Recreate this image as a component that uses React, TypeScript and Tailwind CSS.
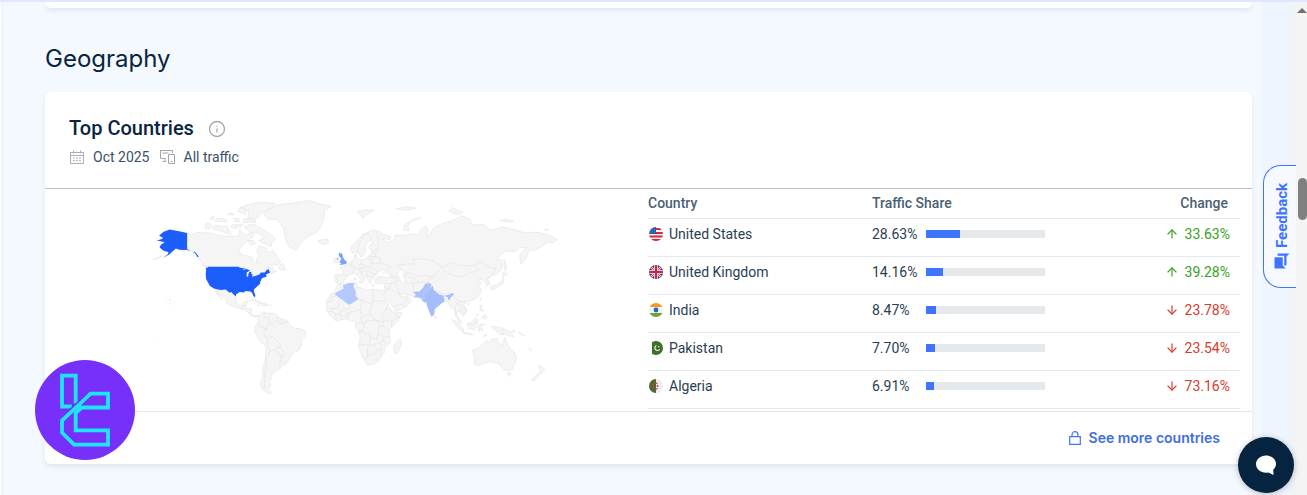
import React from 'react';
import { ArrowDown, ArrowUp, Info } from 'lucide-react';
import { MdForum } from 'react-icons/md';

interface CountryRow {
  name: string;
  share: number;
  change: number;
  flag: React.ReactNode;
}

// Outlines are "lon,lat" pairs
const LAND: string[] = [
  // Canada
  '-141,69.6 -137,69 -134,69.5 -129,70 -125,69.6 -120,69.6 -115,68.5 -109,68 -104,68 -98,67.8 -95,68 -94,71.5 -91,69.5 -88,68.5 -85,69.6 -82,69.2 -82,67.5 -86,66.5 -87,65 -92,63 -94,60.5 -94.5,58.7 -92,57 -88,56.5 -82.5,55.2 -82,53 -79,51.3 -79,54 -76.5,56.5 -78.5,59 -77.5,62.3 -73,62 -70,60.8 -69.5,59 -67,58.5 -64.5,60.2 -62,57.8 -60,55 -57,52.5 -60,50.2 -66,50.2 -70,47.8 -65,48.8 -64,46.5 -61,46 -66,43.7 -67,45 -69,47.3 -71,45 -75,45 -79,43.3 -83,42 -82.5,45.3 -84.5,46.5 -89,48.2 -95,49 -123,49 -125,50 -128,52 -130.5,55 -134,58.5 -138,59.5 -141,60.3',
  // Arctic islands
  '-117,71.5 -112,71 -106,69.5 -102,69 -105,72.7 -110,73 -115,73.4 -119,72.5',
  '-125,72 -121,71.5 -119.5,74 -124,74.3',
  '-90,72.5 -85,70 -80,69.8 -74,68.3 -73,66.5 -77,65.5 -74,64.5 -66,62 -65,64.5 -62,66.5 -67,69 -72,71 -78,72.8 -81,73.7 -85,73.6',
  '-102,72.7 -97,71.6 -96.5,73.8 -101,73.6',
  '-95,73.8 -91,74 -93,72.4 -96,72.6',
  '-110,75.2 -105,75 -108,76.5 -115,76.5 -117,75.4',
  '-98,75 -94,75 -95,76.5 -100,76.5',
  '-91,74.7 -80,74.7 -80,75.7 -90,76.5',
  '-87,76.3 -79,76.3 -75,78.5 -64,81.5 -62,82.5 -75,83 -88,82 -92,81 -86,79.5',
  '-96,79.5 -89,78.3 -88,80 -93,81.2',
  '-105,78 -99,78 -101,79',
  '-118,76 -121,76.5 -117,77.5',
  '-87,65.5 -84,63.2 -80,63.8 -82,65.7',
  '-59,47.7 -55.5,46.8 -53,47 -55.5,51.5 -57.5,50.7',
  '-128,50.8 -123.5,48.3 -126,49.2',
  // Greenland
  '-73,78.2 -68,76 -60,76 -55,72 -54,69.5 -53,66 -50,62 -44,59.9 -42,62 -38,65.5 -32,68 -25,70 -22,72.5 -19,76 -18,80 -12,81.5 -22,82.3 -32,83.6 -45,82.8 -60,82 -67,80.5',
  '-24,65.5 -22,64 -18,63.4 -14,64.8 -16,66.4 -21,65.8',
  // Mexico and central America
  '-117,32.5 -111,31.3 -106.5,31.7 -104,29.3 -101,29.5 -99.5,27.5 -97.2,25.9 -97.8,22.3 -96,19 -94.5,18.2 -91.5,18.6 -90.3,21 -87,21.5 -88,18.4 -91,17.5 -92.2,14.6 -96,15.8 -101,17.5 -105.5,20 -106,23 -109.4,26 -112.5,30 -114.8,31.7 -112,27 -109.6,23 -112.2,25.8 -115,29',
  '-92,14.6 -91,17.7 -88.3,18.3 -88.8,15.9 -83.2,15 -83.7,11 -81.5,9 -79,9.5 -77.3,8.5 -80,7.4 -83,8.3 -85.8,10.5 -87.7,13',
  '-85,22 -81,23.2 -77,21.5 -74.2,20.2 -77.7,19.9 -78.5,21.5 -82,22.6',
  '-74,19.9 -71,19.9 -68.4,18.6 -71,17.7 -74.4,18.3',
  '-67.2,18.4 -65.7,18.4 -65.8,18 -67,18',
  '-78.3,18.4 -76.3,18 -77.5,17.8',
  // South America
  '-77.3,8.5 -75,10.8 -71.8,12.3 -71,11 -68,11.3 -62,10.6 -60,8.3 -57,6 -52,4.5 -50,1.5 -48,-1 -44,-2.7 -39,-3 -35,-5.5 -35,-9 -39,-13 -39,-18 -41,-22 -46,-24 -48.7,-28 -52,-33 -55,-35 -58.4,-34.2 -57,-37 -62,-39 -65,-41 -65.5,-45 -68,-47.5 -66,-49 -69,-52.3 -65,-54.8 -69,-55.5 -74,-52.5 -75.5,-48 -73,-42 -73.5,-37 -71.5,-31 -70.3,-19 -76,-14 -79.5,-7.5 -81,-5 -80,-1 -78.7,1.5 -77.3,4',
  // Europe mainland
  '-9,43.2 -2,43.4 -1.3,46 -4.6,48.3 1.5,50.2 4,52 8,54 8.2,57 10.6,57.6 10,54.5 14,54 19,54.5 21.5,57 24,57.3 23.5,59.2 28,59.6 30,60 23,60 21.3,61.5 25.3,65 22,65.8 17.3,61.5 18.8,60 16.5,56.8 14.3,55.5 11,59 7,58 5,60 6,62.5 12,66 16,69 25,71 31,70.2 33,69.3 41,67.5 40,66.2 33,66.6 38,64 44,66 45,68.5 54,68.4 60,69 66,68.5 67,71 72,73 74,71.5 73,67.5 76,69 80,72.5 86,74 98,76 104,77.7 112,76 113,73.5 124,73.7 130,71 140,72.5 150,71.5 160,69.7 170,70 180,69 190,66.2 187,64.6 180,64.5 177,62.6 170,60 164,59.8 163,57 160,53 156.7,51 156,57 162,61.5 156,61.6 152,59 143,59.3 135,54.7 140,53.5 140.5,48 135,43.3 130.7,42.3 127.5,39.8 129.4,36 126.5,34.5 125,38 121.5,40 118,39 122.3,37 119.3,35 121.8,31 119,25.5 113,22.3 108,21.6 106,19 109,13.5 107,10.4 105,9 105,11 100.5,13.4 99.3,10 103.3,4 103.8,1.4 101,3 100,7 98.3,9 98,15 94.3,16 92,21.5 88,21.7 80,15 77.5,8 73,18 70,21 67,24.6 57,26.7 51,28 48,30 51,25 56.3,26 59.7,22.5 55,17 45,12.9 42.7,17 39,21.5 35,28 34.4,31.3 36,36.5 30.5,36.5 27.3,37 26.3,39.5 30,41.2 35,42 41,41.2 37,45 35,46.5 31,46.7 28,43.8 26,40.7 24,40.4 22.7,36.5 19.5,41 13.7,45.4 18.4,40 16,38 12.5,41.6 8.8,44.4 3.1,43 0,40 -2,36.8 -6,36.2 -9,38',
  '-10,52 -6.3,52.2 -6,54.2 -8,55.2 -10,54',
  '12.5,37.9 15.6,38.2 15,36.8',
  '8.3,40.9 9.7,41 9.6,39.2 8.5,39',
  '24,35.4 26.3,35.2 24,35',
  '11,79.3 16,76.7 21,78.7 26,80 17,80',
  '46,80.5 55,80 64,80.8 55,81.4',
  '52,71.2 57,70.7 56,73 60,75.5 68,76.8 62,76.4 54,74',
  '93,79.5 100,78 105,79 96,81',
  '138,75.5 146,75 151,75.2 143,76.1',
  '178,71 182,71.5 180,70.8',
  '142,54.3 144.5,49 143,46 142,50',
  // Africa
  '-6,35.8 0,36 10,37.3 11,34 20,31 25,31.8 32.3,31.2 34,27.5 37.3,21 38.5,18 43,12 51,11.9 47,4 40,-3 39.5,-8 40.7,-15 35,-20 35.4,-24 32.6,-27 30,-31 25.7,-34 20,-34.8 18,-32 15,-27 12,-18 13.7,-11 12,-5 9,-1 9.6,4 5,4.5 1,6 -8,4.4 -13,8.6 -17,14.7 -16,20 -17,21 -13,27.7 -9.7,30',
  '49.3,-12 50.5,-16 47,-25 44,-24 43.5,-21 44.5,-16.5',
  '80,9.7 81.8,7.3 80.3,6',
  // East Asia and Oceania
  '130,33.8 136,35.8 138.5,37.5 141.3,41.3 142,39.5 140.7,36 136,33.6 131,31.3',
  '140,41.7 141.7,45.4 145.3,43.5 142,42.3',
  '120.2,23 121.7,25.2 121,22.2',
  '108.7,19.5 111,20 110,18.4',
  '95.3,5.6 98.5,4 103.5,-1 106,-3.2 105.7,-5.8 101,-2.5',
  '105.3,-6.7 110,-6.5 114.4,-7.8 114,-8.5 108,-7.7',
  '109,1.5 113,3 116.7,7 119,5 117.5,1 115.8,-4 110.2,-2.8',
  '119.5,0.5 125,1.5 121,0.4 123,-4.8 120.4,-3 119.7,-5.5 118.8,-2.8',
  '120.6,18.5 122.2,18.3 121.6,15 124,12.8 120.6,13.8',
  '122,7 125.5,9.7 126.4,7.3 125.4,5.7',
  '117,8.4 119.5,11.2 118.5,9.4',
  '123.6,-10.3 127,-8.4 124.5,-9.2',
  '131,-0.8 134.2,-1 138,-1.7 141,-2.6 147.5,-6 150.7,-10.5 143.5,-8.3 138,-8.3 133,-4 132,-2.5',
  '148.5,-5.6 152,-4.2 150.5,-6.3',
  '155,-5.7 161,-9.5 156,-7.5',
  '164,-20.2 167,-22.3 165,-21.6',
  '114,-22 119,-20 122.3,-17.7 126,-14 129.5,-15 131,-12 136.6,-12 135.5,-15 140.5,-17.6 142.5,-10.8 146,-19 151,-23.5 153.5,-28.5 150,-37.5 146,-39 143.5,-38.7 139,-35.8 137.8,-33 134,-32.8 129,-31.6 124,-33.5 118,-35 115,-34.2 115.7,-31.5',
  '144.7,-40.8 148.2,-41 147,-43.5',
  '173,-34.6 178.3,-37.8 175,-41.5 174,-39',
  '172.7,-40.6 174.2,-41.8 168.8,-46.6 166.6,-45.8',
  '-160,22 -159.3,22 -159.5,21.7',
  '-156,20 -155,19.5 -155.8,19',
];

const BORDERS: string[] = [
  // South America
  '-72,11.5 -72.5,7.5 -67.5,6 -67,1.5 -70,0 -70,-4.2 -75,-0.2 -79,-4.8',
  '-77.7,0.8 -75,-0.2 -70,-4.2 -73,-7.5 -70.5,-11 -69,-12.5 -69.5,-17.5 -67,-23 -70,-29 -70,-34 -71.7,-40 -71.7,-47 -72,-52',
  '-67,1.5 -64,1.5 -60.7,5.2 -60,8.3',
  '-60,5 -59,1.5 -52,2.3 -51.6,4',
  '-57,6 -57,2',
  '-54,5.8 -54.5,2.3',
  '-69,-11 -65,-10 -60.5,-14 -58,-17 -58,-20 -62,-20 -62.7,-22 -67,-23',
  '-58,-20 -55.8,-22 -54.3,-24.5 -54.6,-27 -58.5,-27.2 -57.7,-25 -62.7,-22',
  '-54.6,-27 -57.6,-30 -53.5,-33.5',
  '-57.6,-30 -58.3,-34',
  // Africa
  '-13,27.7 -8.7,27.7 -8.7,26 -12,26 -12,23.5 -13,21.3 -17,21',
  '-5,25 -6,16 -12,15 -16,16.4',
  '-12,15 -11.5,12.5 -16.5,12.4',
  '-11.5,12.5 -8,10.5 -8,4.5',
  '-8,10.5 -5,10 -3,10 -3,5',
  '-5,10 -5.5,11 -1,15 4,15 4,19',
  '1,6 1,11 4,12',
  '2.7,6.4 3.6,11.7 8,13 13.5,13.7 15,20 15,23 24,19.5',
  '12,23.5 15,23',
  '11,34 9.5,30 10,26 12,23.5',
  '25,31.8 25,22 37,22',
  '25,22 24,19.5 24,15.7 22,13 23,10.5 27,5 31,3.7 36,4.4 42,4 41.5,-1.7',
  '13.5,13.7 15,10 14,6 16,2 10,2',
  '15,7.5 19,9 23,10.9',
  '18.5,4 27,5 31,3.7 30,-1.4 29,-4.5 30.8,-8.3 28.5,-8.5 28.4,-12 30,-13 25,-11.5 22,-13 22,-16 23.5,-17.6 12,-17.2',
  '12,-6 16.7,-6 17.5,-8 21.7,-7 22,-11 24,-11',
  '16,2 18.5,4 16,-4 12,-5',
  '34,4.4 34,-1 39.5,-4.8',
  '30,-1 34,-1',
  '38.5,18 36.5,15 34,10 33,8 36,4.4',
  '36.5,15 42.5,12.5',
  '43,11 48,8 42,4',
  '30.8,-8.3 33,-9.5 40.4,-10.5',
  '33,-9.5 34.5,-14 30,-15.6 33,-17 32,-22.4 32,-26.5',
  '34.5,-12 35.8,-16 34.5,-17',
  '23.5,-17.6 25.3,-17.8 30,-15.6',
  '25.3,-17.8 29,-22 25.5,-25.5 20.8,-26.8 20,-22 21,-18',
  '20,-22 20,-28.5 16.5,-28.6',
  '29,-22 32,-22.4',
  '27,-30 29,-29 28.5,-30.5 27,-30',
  // Europe
  '-2,43.4 3,42.4',
  '-7,42 -7,37.2',
  '2.5,51 6,49.5 8,49 7.5,47.5 7,44',
  '6,49.5 6,51.8 7,53.3',
  '7.5,47.5 13,47.5 13.7,45.5 17,46 22,46 24,44 28,44',
  '12,50.3 15,51 18.7,49.5 14,48.5 12,50.3',
  '14.3,54 15,51',
  '18.7,49.5 22.5,49 24,50.5 23.5,54 20,54.4',
  '13,47.5 17,48 22.5,48.3 26,48 28,46 28.2,45.4',
  '23.5,51.5 31,51.5 31,55.5 27,56 28,59.5',
  '23.5,54 27,56 21,56',
  '24,57.8 27.5,57.5',
  '31,51.5 35,51 40,49.5 38,47',
  '19,42 22,42 26.3,41.7',
  '19,45 20,42',
  '11.5,59 12.5,64 17,68.5 20.5,69 24,66',
  '28.5,70 29,67 30,63 28,60.5',
  // Asia
  '47,42 41,43.3',
  '51,47 47,50 55,51 62,51 61,54 71,54.5 77,53.5 83,51 87,49',
  '53,41 56,45 62,43.5 66,42 71,42.5 80,42 83,46 87,49',
  '53,37.3 61,36.5 66,37.5 71,38 75,37.2',
  '56,41 61,41.3 66,37.5',
  '61,36.5 61,30 62,26',
  '61,30 66,30 70,33 72,36.8',
  '87,49 92,50.7 98,52 99,50.5 108,49.5 116,50 120,47 112,45 105,41.7 97,42.7 90,45.5 87,49',
  '116,50 120,53 127,50 131,48 135,48.3 131,43',
  '80,42 74,40 75,37 78,35',
  '78,35 79,31 82,30 88,28 97,28.3 98,25 101,21.5 108,21.6',
  '92,24 94,25 97,28',
  '98,21 100,20 98,16 99,11',
  '100,20 102,18 105,16 105,14.5 102.5,13.8 103,11',
  '102,22 104,19 107,16 107.5,12 105,10.5',
  '126,40 130.5,42.3',
  '126.5,37.8 128.5,38.4',
  '36,36.5 42,37 44.5,37 48,30',
  '44.5,37 45,39.5 48.5,38.5',
  '41,41.5 45,41 48.5,41.8',
  '35.5,33 39,32.5 42,37',
  '39,32.5 47,29 50,25',
  '35,29.5 39,32',
  '43,17 49,18.5 52,19 55,22.7 55.5,25',
  '52,19 53,16.7',
  '141,-2.6 141,-9',
  '109.5,1 115,1 117.5,4',
];

const UNITED_STATES: string[] = [
  '-122.8,49 -95,49 -94.5,48.6 -91,48 -88.5,48.2 -92,46.7 -88,47.4 -84.7,46.4 -86,45.8 -87.8,45 -87.8,42 -86.5,41.8 -86.2,44.2 -85,45.7 -83.4,45 -83.8,43.8 -82.6,43.8 -83,41.7 -79,42.7 -76.5,43.5 -75,45 -71.5,45 -70,46.8 -68,47.3 -67,44.8 -70.5,43.5 -70,41.7 -74,40.7 -75.5,38 -76,36 -81,32 -81.4,30.5 -80,26.5 -80.5,25.2 -81.8,26.2 -83,29 -84.5,30 -89,30.3 -90,29.1 -94,29.6 -97.3,27.5 -97.2,25.9 -99.5,27.5 -101.5,29.6 -103,29 -106.5,31.7 -111,31.3 -117,32.5 -120.6,34.6 -124,40 -124.4,43 -124,46.5 -124.5,48.3 -122.8,48.2',
  '-141,69.6 -147,70.3 -156.5,71.3 -162,70.2 -166,68.3 -162.5,67 -163.5,66.4 -168,65.6 -161,64.6 -164.5,63.2 -165.5,61.5 -162,59.6 -157.5,58.7 -158.5,57.3 -163,54.8 -157,57.2 -153.5,59.4 -151,61 -148,60.2 -144,60 -141,60.2 -138,59.2 -141,60.8',
  '-136,58.8 -134,58.2 -131.500,55.5 -130.5,56 -134,59',
];

const UNITED_KINGDOM = ['-5.5,50.1 1.2,51 1.6,52.7 -0.2,53.5 -2,55.8 -2.2,57.5 -5,58.6 -5.7,56.5 -3.2,54.5 -4.4,53 -5,51.8 -3,51.4', '-8,54.4 -6,54 -6.2,55.2'];
const ALGERIA = ['-2,35 3,36.8 8.5,36.9 7.6,34 9.5,30.2 9.5,26.5 12,23.5 5.5,19.5 3.2,19 -8.7,27.3 -8.7,28.7 -3,31.5 -1.2,32.5'];
const PAKISTAN = ['61.6,25.2 66.5,25 68,23.8 71,24.5 70,28 74.5,31 75.5,33 77.5,35.5 74.5,37 71.5,36 70,33.5 66.5,30 61,29.6 63.2,27.2'];
const INDIA = [
  '68.5,23.7 71,24.5 70,28 74.5,31 75.5,33 78.5,34.5 79,31.5 81,30 84,27.5 88,26.7 88.5,24.5 89,21.8 86.5,20.3 82.3,16.6 80.2,15 79.8,10.5 77.5,8 76.2,10.2 74,15.5 72.8,20 72.3,21.3 70.8,20.7 69,22.3',
  '88.5,26.5 92,27 96.5,28.8 97,27.2 94.7,25.3 93,22.5 91.5,23.7 92.2,25 89.8,25.7',
];

// Miller projection, centred on Greenwich
const project = (point: string): string => {
  const [lon, lat] = point.split(',').map(Number);
  const phi = (lat * Math.PI) / 180;
  const x = 204 + lon * 1.12;
  const y = 136.5 - 63 * 1.25 * Math.log(Math.tan(Math.PI / 4 + 0.4 * phi));
  return `${x.toFixed(1)} ${y.toFixed(1)}`;
};

const toPath = (lines: string[], close = true): string =>
  lines.map(line => 'M' + line.split(' ').map(project).join('L') + (close ? 'Z' : '')).join('');

const WorldMap: React.FC = () => (
  <svg viewBox="0 0 430 216" className="w-[430px] max-w-full" role="img" aria-label="Traffic by country">
    <path d={toPath(LAND)} fill="#f5f5f5" stroke="#e2e2e2" strokeWidth="0.6" strokeLinejoin="round" />
    <path d={toPath(BORDERS, false)} fill="none" stroke="#e2e2e2" strokeWidth="0.6" />
    {/* Caspian and Black seas */}
    <path d={toPath(['47,45 51,47 53,45 51,43 53.5,40 53.5,37 50,37.2 49,40 47.5,43', '28.5,43.5 31,46.3 34,44.5 38,44.5 41,42 38,41.2 33,42 29,41.4'])} fill="#fff" stroke="#e2e2e2" strokeWidth="0.5" />
    <path d={toPath(UNITED_STATES)} fill="#1c5efc" />
    <path d={toPath(UNITED_KINGDOM)} fill="#7ea1f5" />
    <path d={toPath(INDIA)} fill="#a6bdfc" />
    <path d={toPath(PAKISTAN)} fill="#acc1fb" />
    <path d={toPath(ALGERIA)} fill="#b3c8fd" />
    <path d="M12 71l9-4M28 111h2M33 113h1M16 153h1" stroke="#d5d8de" strokeWidth="0.7" />
  </svg>
);

const Flag: React.FC<{ id: string; children: React.ReactNode }> = ({ id, children }) => (
  <svg viewBox="0 0 14 14" className="h-3.5 w-3.5 shrink-0" aria-hidden="true">
    <clipPath id={id}><circle cx="7" cy="7" r="7" /></clipPath>
    <g clipPath={`url(#${id})`}>{children}</g>
  </svg>
);

const COUNTRIES: CountryRow[] = [
  {
    name: 'United States',
    share: 28.63,
    change: 33.63,
    flag: (
      <Flag id="us">
        <path fill="#f4f4f6" d="M0 0h14v14H0z" />
        <path fill="#d7263f" d="M7 1h7v2H7zM7 5h7v2H7zM0 8.600h14v1.800H0zM0 12h14v2H0z" />
        <path fill="#2c5aa8" d="M0 0h7v7H0z" />
        <path stroke="#9db8e2" strokeWidth="0.6" strokeDasharray="0.8 1.2" d="M1 3h6M1 5h6" />
      </Flag>
    ),
  },
  {
    name: 'United Kingdom',
    share: 14.16,
    change: 39.28,
    flag: (
      <Flag id="gb">
        <path fill="#283c86" d="M0 0h14v14H0z" />
        <path stroke="#f5f5f8" strokeWidth="2.2" d="M1 1l12 12M13 1L1 13" />
        <path stroke="#d8203a" strokeWidth="0.9" d="M1 1l12 12M13 1L1 13" />
        <path stroke="#f5f5f8" strokeWidth="3.600" d="M7 0v14M0 7h14" />
        <path stroke="#d8203a" strokeWidth="2" d="M7 0v14M0 7h14" />
      </Flag>
    ),
  },
  {
    name: 'India',
    share: 8.47,
    change: -23.78,
    flag: (
      <Flag id="in">
        <path fill="#f4f4f4" d="M0 0h14v14H0z" />
        <path fill="#f5981d" d="M0 0h14v4H0z" />
        <path fill="#6ba52f" d="M0 10h14v4H0z" />
        <circle cx="7" cy="7" r="2.4" fill="#2168c4" />
      </Flag>
    ),
  },
  {
    name: 'Pakistan',
    share: 7.7,
    change: -23.54,
    flag: (
      <Flag id="pk">
        <path fill="#fafafa" d="M0 0h14v14H0z" />
        <path fill="#3f702a" d="M3 0h11v14H3z" />
        <path fill="none" stroke="#f4f7f2" strokeWidth="1.2" d="M7.500 4.500a2.600 2.600 0 1 0 3.200 3.800" />
        <circle cx="9.800" cy="5.800" r="0.700" fill="#f4f7f2" />
      </Flag>
    ),
  },
  {
    name: 'Algeria',
    share: 6.91,
    change: -73.16,
    flag: (
      <Flag id="dz">
        <path fill="#eeeeee" d="M0 0h14v14H0z" />
        <path fill="#44702f" d="M0 0h7v14H0z" />
        <path fill="none" stroke="#d2304a" strokeWidth="1.2" d="M8.500 4.600a2.800 2.800 0 1 0 0 4.800" />
        <circle cx="8.5" cy="7" r="1" fill="#d2304a" />
      </Flag>
    ),
  },
];

const CalendarIcon: React.FC = () => (
  <svg viewBox="0 0 14 14" className="h-3.5 w-3.5" fill="none" stroke="#a9adb8" aria-hidden="true">
    <path d="M0.500 2.500h13v11H0.500zM0.500 5.500h13M3.500 0.500v3M10.500 0.500v3" />
    <path d="M3 8h8M3 10.700h8" strokeDasharray="2 1" />
  </svg>
);

const DevicesIcon: React.FC = () => (
  <svg viewBox="0 0 16 14" className="h-3.5 w-4" fill="none" stroke="#a0a4ae" aria-hidden="true">
    <path d="M6.500 8.500h-5v-8h12V3M3.500 3h6M7 11.500H3.500M6 8.500v3" />
    <path d="M9.500 4.500h6v9h-6zM11.500 11.500h2" />
  </svg>
);

const LockIcon: React.FC = () => (
  <svg viewBox="0 0 12 14" className="h-3.5 w-3" fill="none" stroke="#3e74fe" strokeWidth="1.2" aria-hidden="true">
    <path d="M0.700 5.600h10.600v7.700H0.700zM3 5.600V3.700a3 3 0 0 1 6 0v1.900" />
  </svg>
);

const BrandBadge: React.FC = () => (
  <svg viewBox="0 0 100 100" className="absolute top-[358px] left-[35px] h-[100px] w-[100px]" aria-hidden="true">
    <circle cx="50" cy="50" r="50" fill="#7630fa" />
    <g fill="none" stroke="#1de5fb" strokeWidth="3.8">
      <path d="M40.700 43.500V15.700H27V46.500H37" />
      <path d="M46.500 47.500H73V33.700H55.500L27 60.500V72.500L39 84.700H73V70.300H40.700V53z" />
    </g>
    <path d="M33 51.200L52 33.400" stroke="#7630fa" strokeWidth="1.4" />
  </svg>
);

const Change: React.FC<{ value: number }> = ({ value }) => {
  const Arrow = value > 0 ? ArrowUp : ArrowDown;
  return (
    <div className={`flex items-center justify-end gap-1.5 ${value > 0 ? 'text-[#38a222]' : 'text-[#d63b2c]'}`}>
      <Arrow size={14} strokeWidth={2} />
      {Math.abs(value).toFixed(2)}%
    </div>
  );
};

const CountriesTable: React.FC = () => (
  <table className="mr-3 w-[592px] shrink-0 table-fixed border-collapse text-left text-sm text-[#2a3e52]">
    <thead>
      <tr className="h-[29px] border-b border-[#e6e9ec] text-[#4b5f72]">
        <th className="w-56 font-medium">Country</th>
        <th className="font-medium">Traffic Share</th>
        <th className="w-28 pr-3 text-right font-medium">Change</th>
      </tr>
    </thead>
    <tbody>
      {COUNTRIES.map(country => (
        <tr key={country.name} className="h-[38px] border-b border-[#e6e9ec]">
          <td className="pb-1.5">
            <div className="flex items-center gap-1.5 pl-px">
              {country.flag}
              {country.name}
            </div>
          </td>
          <td className="pb-1.5">
            <div className="flex items-center">
              <span className="w-[54px]">{country.share.toFixed(2)}%</span>
              <div className="h-2 w-[119px] bg-[#e6e9ec]">
                <div className="h-full bg-[#3e74fe]" style={{ width: `${country.share}%` }} />
              </div>
            </div>
          </td>
          <td className="pr-2.5 pb-1.5">
            <Change value={country.change} />
          </td>
        </tr>
      ))}
    </tbody>
  </table>
);

const App: React.FC = () => {
  return (
    <div className="relative flex min-h-screen overflow-hidden border-t-2 border-[#dfe6fd] bg-[#f4f8ff] font-[Roboto,sans-serif]">
      <div className="w-[3px] border-r border-[#eaf0f8] bg-[#f8fbff]" />

      <main className="min-w-0 flex-1 pr-2.5 pl-[42px]">
        <div className="h-1.5 rounded-b-md bg-white shadow-[0_3px_4px_#e2e8f0]" />

        <h1 className="pt-[33px] pb-[15px] font-[Inter,sans-serif] text-2xl leading-9 text-[#092540]">Geography</h1>

        <section className="rounded-md bg-white shadow-[0_3px_5px_#e2e8f0]">
          <header className="h-[97px] border-b border-[#bfbfc2] px-6 pt-6">
            <div className="flex items-center gap-3.5">
              <h2 className="text-xl leading-6 font-medium text-[#092540]">Top Countries</h2>
              <button type="button" aria-label="About top countries" className="pt-0.5 text-[#a3a7af]">
                <Info size={18} strokeWidth={1.7} />
              </button>
            </div>
            <div className="mt-[7px] flex items-center gap-[9px] pl-px text-sm text-[#3a5166]">
              <CalendarIcon />
              <span>Oct 2025</span>
              <DevicesIcon />
              <span>All traffic</span>
            </div>
          </header>

          <div className="flex justify-between pb-0.5">
            <div className="min-w-0 flex-1 pl-24">
              <WorldMap />
            </div>
            <CountriesTable />
          </div>

          <footer className="flex h-[53px] items-center justify-end border-t border-[#e6e9ec] pr-8">
            <a href="#countries" className="flex items-center gap-2 font-[Inter,sans-serif] text-sm font-semibold text-[#3e6ddf]">
              <LockIcon />
              See more countries
            </a>
          </footer>
        </section>
      </main>

      <div className="w-7 bg-[#eff5ff]" />
      <div className="w-1.5 bg-[#f0f4f6]" />
      <div className="flex w-[11px] flex-col items-end bg-[#f4f4f4]">
        <svg viewBox="0 0 10 6" className="mt-[6px] h-1.5 w-2.5" aria-hidden="true">
          <path d="M0 5l5-5 5 5z" fill="#707070" />
        </svg>
        <div className="mt-[164px] h-[42px] w-[9px] rounded-full bg-[#808080]" />
      </div>

      <button
        type="button"
        className="absolute top-[163px] right-[11px] flex h-[123px] w-[33px] rotate-180 items-center justify-center gap-1 rounded-r-[18px] border border-l-0 border-[#3e74fe] bg-[#f6f9ff] pr-1 text-[15px] font-bold text-[#3e74fe] [writing-mode:vertical-rl]"
      >
        <MdForum size={18} className="rotate-90" />
        Feedback
      </button>

      <BrandBadge />

      <button
        type="button"
        aria-label="Open chat"
        className="absolute top-[435px] right-[13px] flex h-14 w-14 items-center justify-center rounded-full bg-[#06243f] shadow-[0_1px_6px_rgba(0,0,0,0.25)]"
      >
        <svg viewBox="0 0 22 22" className="h-[22px] w-[22px]" fill="#fff" aria-hidden="true">
          <path d="M11 1.500c5.500 0 10 3.600 10 8.300 0 2.400-1 4.400-2.800 5.900l.3 5.300-5-2.400c-.8.200-1.600.2-2.500.2C5.500 18.800 1 14.800 1 10s4.500-8.500 10-8.500z" />
        </svg>
      </button>
    </div>
  );
};

export default App;
